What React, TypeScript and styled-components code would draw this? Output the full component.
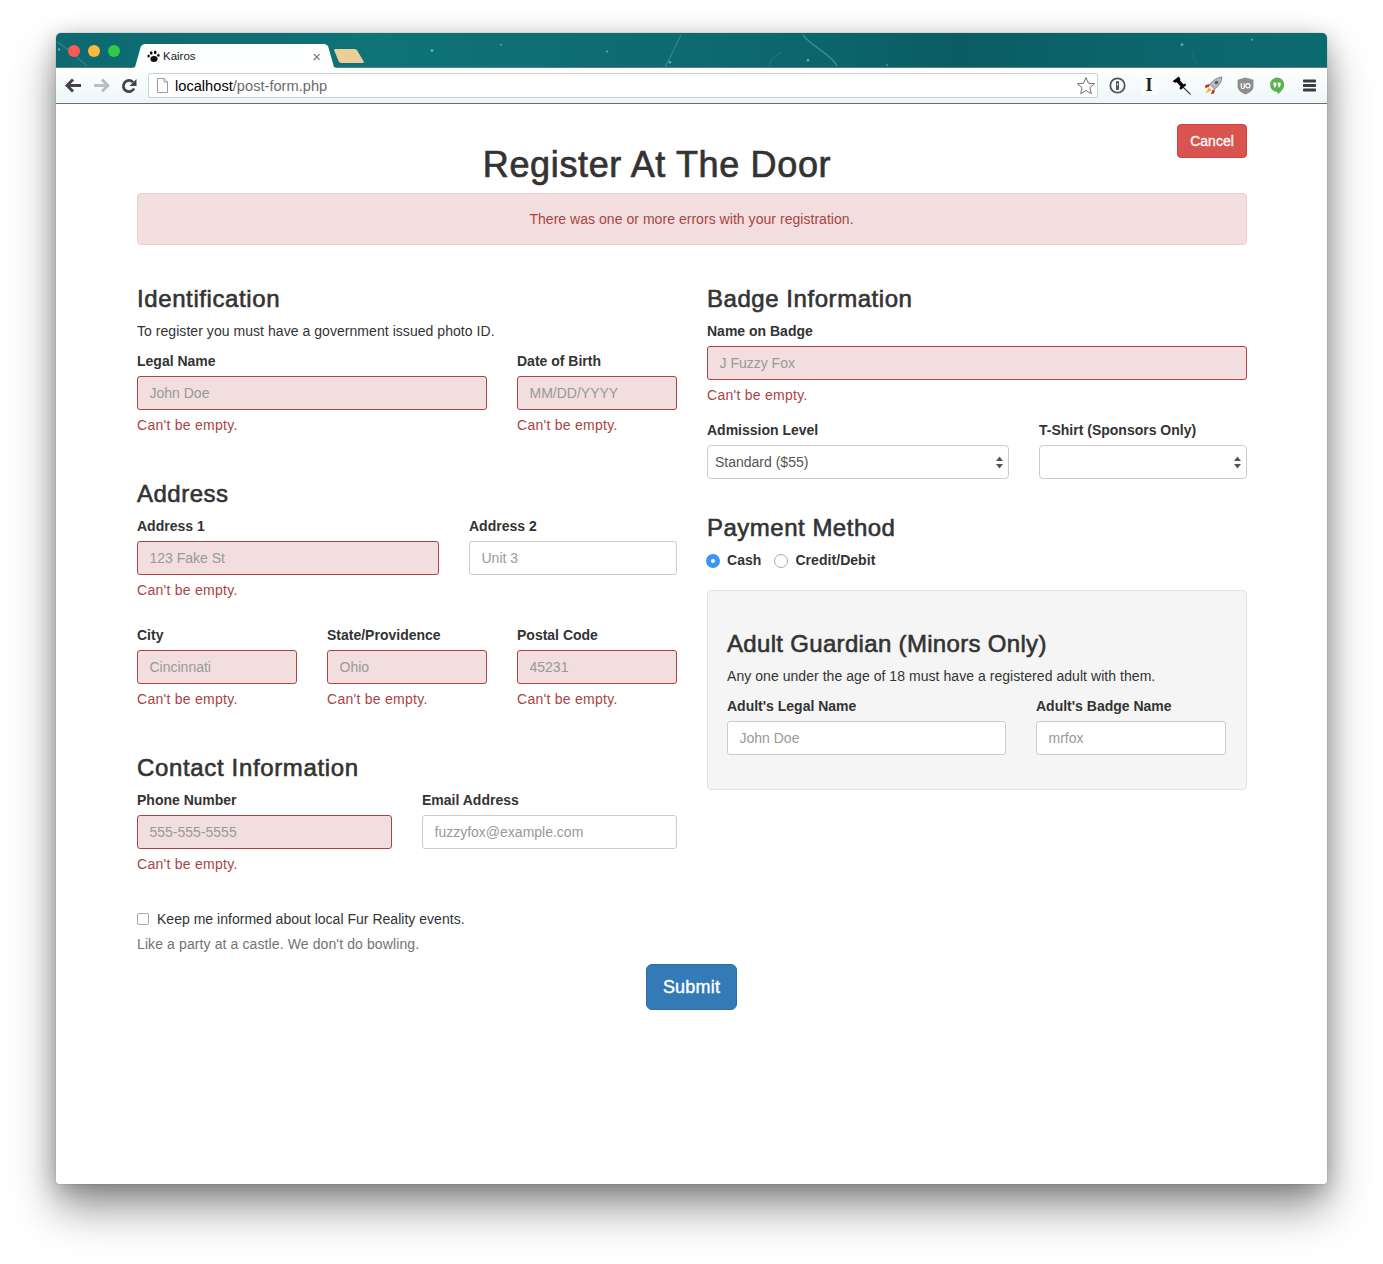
import React from "react";
import styled, { createGlobalStyle } from "styled-components";

const GlobalStyle = createGlobalStyle`
    html, body {
        margin: 0;
        padding: 0;
        background: #ffffff;
    }
    * {
        box-sizing: border-box;
    }
    body {
        font-family: "Liberation Sans", Arial, sans-serif;
        font-size: 14px;
        line-height: 20px;
        color: #333333;
    }
`;

const Page = styled.div`
    width: 1383px;
    height: 1264px;
    padding: 33px 56px 80px;
    overflow: hidden;
`;

const BrowserWindow = styled.div`
    height: 1151px;
    background: #ffffff;
    border-radius: 5px 5px 3px 3px;
    box-shadow: 0 24px 44px rgba(0, 0, 0, 0.42), 0 4px 22px rgba(0, 0, 0, 0.22), 0 0 1px rgba(0, 0, 0, 0.5);
    overflow: hidden;
`;

const TabStrip = styled.div`
    position: relative;
    height: 35px;
    display: flex;
    align-items: flex-end;
    padding-left: 77px;
    border-bottom: 1px solid #5d7f82;
    background: linear-gradient(90deg, #0c6a70 0%, #0f7378 25%, #0c6a70 50%, #0b666c 60%, #0a5c62 71%, #0b666c 85%, #0b6a70 100%);
`;

const StripArt = styled.svg`
    position: absolute;
    inset: 0;
    width: 100%;
    height: 100%;
    opacity: 0.8;
    filter: blur(0.7px);
`;

const Lights = styled.div`
    position: absolute;
    left: 12px;
    top: 12px;
    display: flex;
    gap: 8px;
`;

const Light = styled.span<{ $color: string }>`
    width: 12px;
    height: 12px;
    border-radius: 50%;
    background: ${(p) => p.$color};
`;

const Tab = styled.div`
    position: relative;
    width: 203px;
    height: 24px;
    margin-bottom: -1px;
    display: flex;
    align-items: center;
    padding: 0 15px 0 14px;
    gap: 3px;
    background: #fdfefe;
    clip-path: polygon(0 100%, 2px 96%, 8px 8%, 11px 0, 192px 0, 195px 8%, 201px 96%, 203px 100%);
    font-size: 11.5px;
    color: #222222;
`;

const TabTitle = styled.span`
    flex: 1;
`;

const TabClose = styled.span`
    font-size: 15px;
    line-height: 1;
    color: #777777;
`;

const NewTab = styled.div`
    position: relative;
    width: 30px;
    height: 14px;
    margin: 0 0 4px -2px;
    background: #ecce9a;
    clip-path: polygon(1px 0, 21px 0, 23px 1px, 30px 13px, 29px 14px, 7px 14px, 5px 13px, 0 1px);
`;

const Toolbar = styled.div`
    height: 36px;
    display: flex;
    align-items: center;
    padding: 0 2px 0 3px;
    background: linear-gradient(#ffffff, #edf6f8);
    border-bottom: 1px solid #6e6e6e;
`;

const IconSlot = styled.div<{ $w: number }>`
    width: ${(p) => p.$w}px;
    flex: none;
    display: flex;
    align-items: center;
    justify-content: center;
`;

const Omnibox = styled.div`
    flex: 1;
    height: 25px;
    margin: 0 3px 0 5px;
    display: flex;
    align-items: center;
    padding: 0 1px 0 8px;
    gap: 7px;
    background: #ffffff;
    border: 1px solid #c9d2d6;
    border-radius: 2px;
    font-size: 14.6px;
    letter-spacing: 0.02px;
    color: #6b6b6b;
`;

const Host = styled.span`
    color: #000000;
`;

const Url = styled.span`
    flex: 1;
`;

const InstaGlyph = styled.span`
    width: 17px;
    height: 19px;
    font-family: "Liberation Serif", serif;
    font-weight: bold;
    font-size: 18px;
    line-height: 19px;
    text-align: center;
    color: #222222;
    background: #fbfdfd;
`;

const Container = styled.div`
    padding: 20px 80px 0 81px;
`;

const TitleRow = styled.div`
    display: flex;
    align-items: flex-start;
`;

const Title = styled.h1`
    flex: 1;
    margin: 20px 0 8px;
    font-size: 36px;
    line-height: 41px;
    font-weight: 400;
    letter-spacing: 0.65px;
    -webkit-text-stroke: 0.7px #333333;
    text-align: center;
    color: #333333;
`;

const CancelButton = styled.button`
    width: 70px;
    height: 34px;
    padding: 0;
    font: inherit;
    -webkit-text-stroke: 0.3px #ffffff;
    color: #ffffff;
    background: #d9534f;
    border: 1px solid #d43f3a;
    border-radius: 4px;
`;

const Alert = styled.div`
    height: 52px;
    margin-bottom: 20px;
    padding: 15px 16px 15px 15px;
    text-align: center;
    letter-spacing: 0.04px;
    color: #a94442;
    background: #f2dede;
    border: 1px solid #ebccd1;
    border-radius: 4px;
`;

const Columns = styled.div`
    display: grid;
    grid-template-columns: 540px 540px;
    gap: 30px;
`;

const Section = styled.h3<{ $spacing?: number }>`
    margin: 20px 0 8px;
    font-size: 24px;
    line-height: 28px;
    font-weight: 400;
    letter-spacing: ${(p) => p.$spacing ?? 0.5}px;
    -webkit-text-stroke: 0.6px #333333;
    color: #333333;
`;

const Text = styled.p`
    margin: 0 0 10px;
    letter-spacing: 0.05px;
`;

const Row = styled.div<{ $cols: string }>`
    display: grid;
    grid-template-columns: ${(p) => p.$cols};
    column-gap: 30px;
`;

const Group = styled.div`
    margin-bottom: 15px;
`;

const Label = styled.label`
    display: block;
    margin-bottom: 5px;
    font-weight: bold;
`;

const Input = styled.input<{ $error?: boolean }>`
    display: block;
    width: 100%;
    height: 34px;
    padding: 6px 12px 6px 11.5px;
    font: inherit;
    color: #555555;
    background: ${(p) => (p.$error ? "#f2dede" : "#ffffff")};
    border: 1px solid ${(p) => (p.$error ? "#a94442" : "#cccccc")};
    border-radius: 3px;
    outline: none;
    &::placeholder {
        color: #999999;
        opacity: 1;
    }
`;

const SelectWrap = styled.div`
    position: relative;
`;

const Select = styled.select`
    display: block;
    width: 100%;
    height: 34px;
    padding: 6px 7px;
    font: inherit;
    color: #555555;
    background: #ffffff;
    border: 1px solid #cccccc;
    border-radius: 4px;
    appearance: none;
    outline: none;
`;

const SelectArrows = styled.svg`
    position: absolute;
    right: 6px;
    top: 11px;
    width: 7px;
    height: 13px;
    pointer-events: none;
`;

const HelpError = styled.div`
    margin: 5px 0 10px;
    letter-spacing: 0.27px;
    color: #a94442;
`;

const RadioRow = styled.div`
    display: flex;
    align-items: center;
    margin-bottom: 20px;
    margin-left: -1px;
`;

const RadioLabel = styled.label`
    display: flex;
    align-items: center;
    gap: 7px;
    margin-right: 13px;
    font-weight: bold;
    letter-spacing: 0.05px;
`;

const Radio = styled.input`
    appearance: none;
    width: 14px;
    height: 14px;
    margin: 2px 0 0;
    border-radius: 50%;
    background: #ffffff;
    border: 1px solid #a8a8a8;
    &:checked {
        border: 5px solid #3d94f6;
    }
`;

const Well = styled.div`
    min-height: 20px;
    margin-bottom: 20px;
    padding: 19px;
    background: #f5f5f5;
    border: 1px solid #e3e3e3;
    border-radius: 4px;
`;

const CheckRow = styled.label`
    display: flex;
    align-items: center;
    gap: 8px;
    margin: 10px 0 5px;
    letter-spacing: 0.02px;
`;

const Checkbox = styled.input`
    appearance: none;
    width: 12px;
    height: 12px;
    margin: 0;
    background: #ffffff;
    border: 1px solid #a8a8a8;
    border-radius: 2px;
`;

const HelpMuted = styled.p`
    margin: 0 0 10px;
    letter-spacing: 0.11px;
    color: #737373;
`;

const SubmitRow = styled.div`
    display: flex;
    justify-content: center;
    padding-right: 1px;
`;

const SubmitButton = styled.button`
    width: 91px;
    height: 46px;
    padding: 0;
    font: inherit;
    font-size: 18px;
    letter-spacing: 0.2px;
    -webkit-text-stroke: 0.4px #ffffff;
    color: #ffffff;
    background: #337ab7;
    border: 1px solid #2e6da4;
    border-radius: 6px;
`;

type FieldProps = {
    label: string;
    placeholder: string;
    error?: boolean;
};

const Field: React.FC<FieldProps> = ({ label, placeholder, error }) => {
    return (
        <Group>
            <Label>{label}</Label>
            <Input placeholder={placeholder} $error={error} readOnly />
            {error && <HelpError>Can't be empty.</HelpError>}
        </Group>
    );
};

const SelectField: React.FC<{ label: string; value?: string }> = ({ label, value }) => {
    return (
        <Group>
            <Label>{label}</Label>
            <SelectWrap>
                <Select defaultValue={value ?? ""}>
                    <option value={value ?? ""}>{value ?? ""}</option>
                </Select>
                <SelectArrows viewBox="0 0 7 13">
                    <path d="M3.5 0.5 L7 5 H0 Z M3.5 12.5 L0 8 H7 Z" fill="#555555" />
                </SelectArrows>
            </SelectWrap>
        </Group>
    );
};

const StripDecoration = () => (
    <StripArt viewBox="0 0 1271 35" preserveAspectRatio="none">
        <g fill="#5fc3c9">
            <circle cx="3" cy="17" r="1.2" />
            <circle cx="376" cy="18" r="1.6" />
            <circle cx="445" cy="12" r="0.9" />
            <circle cx="551" cy="19" r="1" />
            <circle cx="614" cy="30" r="1.3" />
            <circle cx="752" cy="28" r="1.3" />
            <circle cx="831" cy="33" r="0.9" />
            <circle cx="1126" cy="12" r="1.5" />
            <circle cx="1196" cy="7" r="1" />
        </g>
        <g fill="none" stroke="#3f9ba1" strokeWidth="1">
            <path d="M1 9 C12 16 22 26 31 34" opacity="0.5" strokeWidth="2" />
            <path d="M625 2 C620 12 615 24 609 35" opacity="0.7" strokeWidth="1.4" />
            <path d="M747 2 C755 14 776 22 781 34" strokeWidth="1.4" />
            <path d="M726 20 C718 24 713 28 714 35" opacity="0.5" />
            <path d="M1136 20 C1138 26 1140 30 1142 35" opacity="0.3" />
        </g>
    </StripArt>
);

const App: React.FC = () => {
    return (
        <Page>
            <GlobalStyle />
            <BrowserWindow>
                <TabStrip>
                    <StripDecoration />
                    <Lights>
                        <Light $color="#fc5a56" />
                        <Light $color="#fdb93c" />
                        <Light $color="#33c848" />
                    </Lights>
                    <Tab>
                        <svg width="13" height="13" viewBox="0 0 13 13">
                            <g fill="#111111">
                                <ellipse cx="7" cy="9" rx="3.6" ry="3" />
                                <ellipse cx="4.2" cy="3" rx="1.3" ry="1.8" />
                                <ellipse cx="8.2" cy="2.4" rx="1.3" ry="1.8" />
                                <ellipse cx="1.6" cy="6" rx="1.2" ry="1.5" />
                                <ellipse cx="11.4" cy="5.2" rx="1.2" ry="1.5" />
                            </g>
                        </svg>
                        <TabTitle>Kairos</TabTitle>
                        <TabClose>×</TabClose>
                    </Tab>
                    <NewTab />
                </TabStrip>
                <Toolbar>
                    <IconSlot $w={28}>
                        <svg width="17" height="15" viewBox="0 0 17 15">
                            <path d="M8 1.5 L2 7.5 L8 13.5 M2.5 7.5 H16" fill="none" stroke="#444444" strokeWidth="3" />
                        </svg>
                    </IconSlot>
                    <IconSlot $w={28}>
                        <svg width="17" height="15" viewBox="0 0 17 15">
                            <path d="M9 1.5 L15 7.5 L9 13.5 M14.5 7.5 H1" fill="none" stroke="#b9bfc1" strokeWidth="3" />
                        </svg>
                    </IconSlot>
                    <IconSlot $w={28}>
                        <svg width="16" height="16" viewBox="0 0 16 16">
                            <path d="M13 10.5 A5.6 5.6 0 1 1 12 4.2" fill="none" stroke="#444444" strokeWidth="2.8" />
                            <path d="M15.5 1 V8 H8.5 Z" fill="#444444" />
                        </svg>
                    </IconSlot>
                    <Omnibox>
                        <svg width="11" height="15" viewBox="0 0 11 15">
                            <path d="M0.5 0.5 H7 L10.5 4 V14.5 H0.5 Z M7 0.5 V4 H10.5" fill="#ffffff" stroke="#9a9a9a" />
                        </svg>
                        <Url>
                            <Host>localhost</Host>/post-form.php
                        </Url>
                        <svg width="20" height="19" viewBox="0 0 20 19">
                            <path
                                d="M10 1.5 L12.4 7.2 L18.6 7.7 L13.9 11.7 L15.3 17.7 L10 14.5 L4.7 17.7 L6.1 11.7 L1.4 7.7 L7.6 7.2 Z"
                                fill="#ffffff"
                                stroke="#6f6f6f"
                            />
                        </svg>
                    </Omnibox>
                    <IconSlot $w={32}>
                        <svg width="17" height="17" viewBox="0 0 17 17">
                            <circle cx="8.5" cy="8.5" r="7.2" fill="none" stroke="#555555" strokeWidth="1.8" />
                            <rect x="7" y="4" width="3" height="9" rx="1" fill="#555555" />
                            <rect x="8" y="6.5" width="1" height="2" fill="#ffffff" />
                        </svg>
                    </IconSlot>
                    <IconSlot $w={32}>
                        <InstaGlyph>I</InstaGlyph>
                    </IconSlot>
                    <IconSlot $w={32}>
                        <svg width="19" height="19" viewBox="0 0 18 18">
                            <path d="M0.5 5 L6.5 0.5 L8 3 L7.5 4 L11 8 L12.5 7 L13.5 8.5 L8.5 13 L7 11.5 L8 10 L4.5 6 L3 6.5 Z" fill="#000000" />
                            <path d="M10 10 L17.5 17.5" stroke="#222222" strokeWidth="1" />
                        </svg>
                    </IconSlot>
                    <IconSlot $w={32}>
                        <svg width="19" height="19" viewBox="0 0 19 19">
                            <path d="M18 1 C13 1.5 9 4 6 8.5 L10.5 13 C15 10 17.5 6 18 1 Z" fill="#b7bbbf" stroke="#70757a" strokeWidth="0.8" />
                            <circle cx="12.5" cy="6.5" r="1.8" fill="#555c60" />
                            <path d="M6 8 L1.5 9 L1 12 L5 11 Z M11 13 L10 17.5 L7 18 L8 14.5 Z" fill="#d42a17" />
                            <path d="M5 11.5 L1.5 17.5 L7.5 14 Z" fill="#f7a81e" />
                        </svg>
                    </IconSlot>
                    <IconSlot $w={32}>
                        <svg width="17" height="18" viewBox="0 0 16 17">
                            <path d="M8 0.5 L15.5 2.5 V9 C15.5 12.5 12 15 8 16.5 C4 15 0.5 12.5 0.5 9 V2.5 Z" fill="#8e8e8e" />
                            <path d="M4 6 V9.5 A1.4 1.4 0 0 0 6.8 9.5 V6" fill="none" stroke="#ffffff" strokeWidth="1.1" />
                            <circle cx="10.2" cy="8.2" r="2" fill="none" stroke="#ffffff" strokeWidth="1.1" />
                        </svg>
                    </IconSlot>
                    <IconSlot $w={32}>
                        <svg width="16" height="18" viewBox="0 0 16 18">
                            <path d="M8 0.5 A7.2 7.2 0 0 1 15.2 7.7 C15.2 11.5 12 14.5 8.6 17.5 V15 A7.2 7.2 0 0 1 8 0.5 Z" fill="#5cb04f" />
                            <path d="M4.5 5.5 H7.3 V8.5 L5.8 10.5 H4.8 L5.5 8.5 H4.5 Z M8.8 5.5 H11.6 V8.5 L10.1 10.5 H9.1 L9.8 8.5 H8.8 Z" fill="#ffffff" />
                        </svg>
                    </IconSlot>
                    <IconSlot $w={32}>
                        <svg width="13" height="13" viewBox="0 0 13 13">
                            <g fill="#3c3c3c">
                                <rect x="0" y="0.5" width="13" height="3" rx="0.8" />
                                <rect x="0" y="5" width="13" height="3" rx="0.8" />
                                <rect x="0" y="9.5" width="13" height="3" rx="0.8" />
                            </g>
                        </svg>
                    </IconSlot>
                </Toolbar>
                <Container>
                    <TitleRow>
                        <Title>Register At The Door</Title>
                        <CancelButton>Cancel</CancelButton>
                    </TitleRow>
                    <Alert>There was one or more errors with your registration.</Alert>
                    <Columns>
                        <div>
                            <Section $spacing={0.6}>Identification</Section>
                            <Text>To register you must have a government issued photo ID.</Text>
                            <Row $cols="350px 160px">
                                <Field label="Legal Name" placeholder="John Doe" error />
                                <Field label="Date of Birth" placeholder="MM/DD/YYYY" error />
                            </Row>
                            <Section>Address</Section>
                            <Row $cols="302px 208px">
                                <Field label="Address 1" placeholder="123 Fake St" error />
                                <Field label="Address 2" placeholder="Unit 3" />
                            </Row>
                            <Row $cols="160px 160px 160px">
                                <Field label="City" placeholder="Cincinnati" error />
                                <Field label="State/Providence" placeholder="Ohio" error />
                                <Field label="Postal Code" placeholder="45231" error />
                            </Row>
                            <Section $spacing={0.65}>Contact Information</Section>
                            <Row $cols="255px 255px">
                                <Field label="Phone Number" placeholder="555-555-5555" error />
                                <Field label="Email Address" placeholder="fuzzyfox@example.com" />
                            </Row>
                        </div>
                        <div>
                            <Section $spacing={0.55}>Badge Information</Section>
                            <Field label="Name on Badge" placeholder="J Fuzzy Fox" error />
                            <Row $cols="302px 208px">
                                <SelectField label="Admission Level" value="Standard ($55)" />
                                <SelectField label="T-Shirt (Sponsors Only)" />
                            </Row>
                            <Section>Payment Method</Section>
                            <RadioRow>
                                <RadioLabel>
                                    <Radio type="radio" name="payment" defaultChecked />
                                    Cash
                                </RadioLabel>
                                <RadioLabel>
                                    <Radio type="radio" name="payment" />
                                    Credit/Debit
                                </RadioLabel>
                            </RadioRow>
                            <Well>
                                <Section $spacing={0.32}>Adult Guardian (Minors Only)</Section>
                                <Text>Any one under the age of 18 must have a registered adult with them.</Text>
                                <Row $cols="279px 190px">
                                    <Field label="Adult's Legal Name" placeholder="John Doe" />
                                    <Field label="Adult's Badge Name" placeholder="mrfox" />
                                </Row>
                            </Well>
                        </div>
                    </Columns>
                    <CheckRow>
                        <Checkbox type="checkbox" />
                        Keep me informed about local Fur Reality events.
                    </CheckRow>
                    <HelpMuted>Like a party at a castle. We don't do bowling.</HelpMuted>
                    <SubmitRow>
                        <SubmitButton>Submit</SubmitButton>
                    </SubmitRow>
                </Container>
            </BrowserWindow>
        </Page>
    );
};

export default App;
